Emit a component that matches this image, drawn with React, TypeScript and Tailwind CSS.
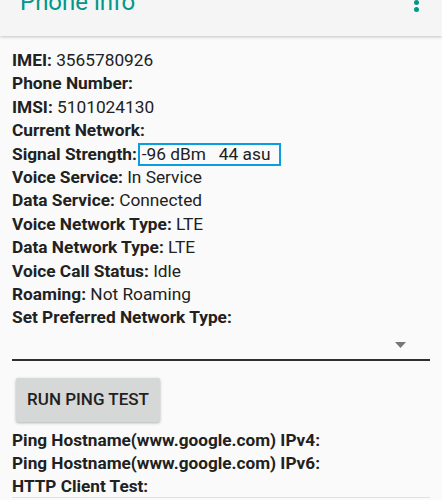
import React from 'react';

const rows: [string, string][] = [
  ['IMEI:', '3565780926'],
  ['Phone Number:', ''],
  ['IMSI:', '5101024130'],
  ['Current Network:', ''],
];

const rowsAfter: [string, string][] = [
  ['Voice Service:', 'In Service'],
  ['Data Service:', 'Connected'],
  ['Voice Network Type:', 'LTE'],
  ['Data Network Type:', 'LTE'],
  ['Voice Call Status:', 'Idle'],
  ['Roaming:', 'Not Roaming'],
  ['Set Preferred Network Type:', ''],
];

function Row({ label, value }: { label: string; value: string }) {
  return (
    <div className="h-[23.4px] leading-[23.4px] whitespace-nowrap">
      <span className="font-bold">{label}</span>
      {value && <span> {value}</span>}
    </div>
  );
}

export default function App() {
  return (
    <div className="w-[442px] h-[500px] overflow-hidden bg-[#fafafa] text-[17.3px] text-[#212121] font-['Roboto',sans-serif]">
      <div className="relative z-10 h-[36px] bg-[#f5f5f5] shadow-[0_1px_3px_rgba(0,0,0,0.22)] flex justify-between pl-[20px] pr-[23px]">
        <span className="mt-[-10px] text-[24px] leading-[24px] text-[#00988a]">Phone info</span>
        <div className="mt-[-7.5px] flex flex-col gap-[2px]">
          <span className="w-[5px] h-[5px] rounded-full bg-[#00988a]" />
          <span className="w-[5px] h-[5px] rounded-full bg-[#00988a]" />
          <span className="w-[5px] h-[5px] rounded-full bg-[#00988a]" />
        </div>
      </div>

      <div className="px-[12px] pt-[13px]">
        {rows.map(([l, v]) => (
          <Row key={l} label={l} value={v} />
        ))}
        <div className="h-[23.4px] leading-[23.4px] whitespace-nowrap flex items-center">
          <span className="font-bold">Signal Strength:</span>
          <span className="ml-[1px] h-[23px] leading-[19px] border-2 border-[#0a9ee0] pl-[2px] pr-[9px] whitespace-pre">
            -96 dBm   44 asu
          </span>
        </div>
        {rowsAfter.map(([l, v]) => (
          <Row key={l} label={l} value={v} />
        ))}

        <div className="h-[31px] border-b-2 border-[#303030] flex items-center justify-end pr-[24px]">
          <svg width="11" height="6" viewBox="0 0 11 6" className="mt-[2px]">
            <path d="M0 0 H11 L5.5 6 Z" fill="#777" />
          </svg>
        </div>

        <button className="mt-[17px] ml-[4px] h-[44px] w-[144px] rounded-[2px] bg-[#d6d7d7] shadow-[0_1px_3px_rgba(0,0,0,0.3)] text-[17px] font-medium text-[#212121]">
          RUN PING TEST
        </button>

        <div className="mt-[7px] text-[17.2px]">
          <Row label="Ping Hostname(www.google.com) IPv4:" value="" />
          <Row label="Ping Hostname(www.google.com) IPv6:" value="" />
          <Row label="HTTP Client Test:" value="" />
        </div>
        <div className="mt-[-2px] border-t border-[#e0e0e0]" />
      </div>
    </div>
  );
}
